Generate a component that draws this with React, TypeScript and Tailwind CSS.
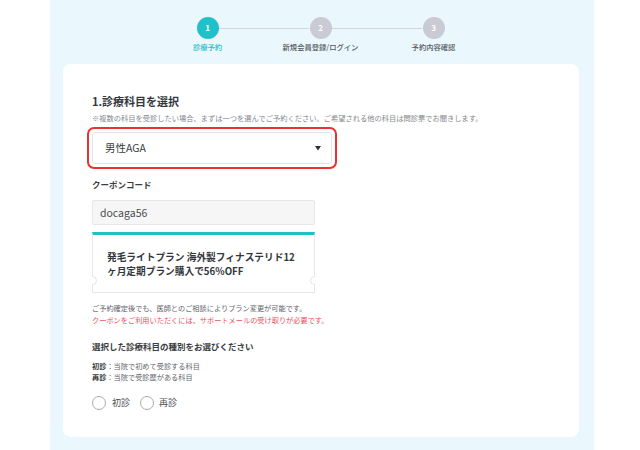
import React from "react";

const steps = [
  { n: "1", label: "診療予約", active: true },
  { n: "2", label: "新規会員登録/ログイン", active: false },
  { n: "3", label: "予約内容確認", active: false },
];

function Notch({ side }: { side: "left" | "right" }) {
  return (
    <>
      <div
        className={
          "absolute top-[41px] w-[9px] h-[9px] rounded-full bg-white border border-[#e3e5e8] " +
          (side === "left" ? "left-[-5px]" : "right-[-5px]")
        }
      />
      <div
        className={
          "absolute top-[40px] w-[5px] h-[11px] bg-white " +
          (side === "left" ? "left-[-6px]" : "right-[-6px]")
        }
      />
    </>
  );
}

export default function App() {
  return (
    <div className="w-[640px] h-[450px] bg-white overflow-hidden font-['Noto_Sans_CJK_JP',sans-serif]">
      <div className="ml-[50px] w-[544px] h-[450px] bg-[#eaf7fd] pt-[17px]">
        {/* stepper */}
        <div className="flex ml-[101px]">
          {steps.map((s, i) => (
            <div key={s.n} className="relative w-[113px] flex flex-col items-center">
              {i < 2 && (
                <div className="absolute top-[11px] left-[67px] w-[91px] h-px bg-[#d2d6dc]" />
              )}
              <div
                className={
                  "relative w-[22px] h-[22px] rounded-full flex items-center justify-center text-white text-[8px] font-bold " +
                  (s.active ? "bg-[#1fc0c8]" : "bg-[#c9cad3]")
                }
              >
                {s.n}
              </div>
              <div
                className={
                  "mt-[3px] text-[7.3px] leading-[10px] whitespace-nowrap font-medium " +
                  (s.active ? "text-[#1fc0c8]" : "text-[#555a60]")
                }
              >
                {s.label}
              </div>
            </div>
          ))}
        </div>

        {/* card */}
        <div className="mt-[12px] ml-[13px] w-[516px] h-[373px] bg-white rounded-[8px] pt-[29px] pl-[29px]">
          <div className="text-[11px] leading-[16px] font-bold text-[#333840]">1.診療科目を選択</div>
          <div className="mt-[4px] text-[7.25px] leading-[10px] text-[#85888e] whitespace-nowrap">
            ※複数の科目を受診したい場合、まずは一つを選んでご予約ください。ご希望される他の科目は問診票でお聞きします。
          </div>

          <div className="mt-[4px] ml-[-5px] w-[250px] border-2 border-[#e8322f] rounded-[7px] p-[3px]">
            <div className="h-[32px] border border-[#e4e5e8] rounded-[3px] bg-white flex items-center justify-between pl-[12px] pr-[10px]">
              <span className="text-[10.5px] text-[#3a3d42]">男性AGA</span>
              <svg width="6" height="5" viewBox="0 0 6 5">
                <path d="M0 0 L6 0 L3 4.5 Z" fill="#2d3035" />
              </svg>
            </div>
          </div>

          <div className="mt-[9px] text-[8.5px] leading-[12px] font-bold text-[#3a3d42]">クーポンコード</div>
          <div className="mt-[10px] w-[223px] h-[25px] bg-[#f6f6f7] border border-[#e6e7ea] rounded-[2px] flex items-center pl-[7px]">
            <span className="text-[10.5px] text-[#4a4d52]">docaga56</span>
          </div>

          <div className="relative mt-[7px] w-[223px] h-[61px] bg-white border border-[#e6e8eb] border-t-[3px] border-t-[#1fc0c8] pl-[14px] pt-[15px]">
            <div className="text-[9.7px] leading-[14px] font-bold text-[#33373d]">
              発毛ライトプラン 海外製フィナステリド12
              <br />
              ヶ月定期プラン購入で56%OFF
            </div>
            <Notch side="left" />
            <Notch side="right" />
          </div>

          <div className="mt-[9px] text-[7.2px] leading-[12px] whitespace-nowrap">
            <div className="text-[#63666b]">ご予約確定後でも、医師とのご相談によりプラン変更が可能です。</div>
            <div className="text-[#ef4e63]">クーポンをご利用いただくには、サポートメールの受け取りが必要です。</div>
          </div>

          <div className="mt-[14px] text-[8.5px] leading-[12px] font-bold text-[#3a3d42]">
            選択した診療科目の種別をお選びください
          </div>

          <div className="mt-[9px] text-[7.2px] leading-[11px] text-[#63666b] whitespace-nowrap">
            <div>
              <span className="font-bold text-[#3a3d42]">初診</span>：当院で初めて受診する科目
            </div>
            <div>
              <span className="font-bold text-[#3a3d42]">再診</span>：当院で受診歴がある科目
            </div>
          </div>

          <div className="mt-[13px] flex items-center">
            <div className="w-[14px] h-[14px] rounded-full border border-[#a9acb2] bg-white" />
            <span className="ml-[6px] text-[9px] text-[#4a4d52]">初診</span>
            <div className="ml-[10px] w-[14px] h-[14px] rounded-full border border-[#a9acb2] bg-white" />
            <span className="ml-[5px] text-[9px] text-[#4a4d52]">再診</span>
          </div>
        </div>
      </div>
    </div>
  );
}
